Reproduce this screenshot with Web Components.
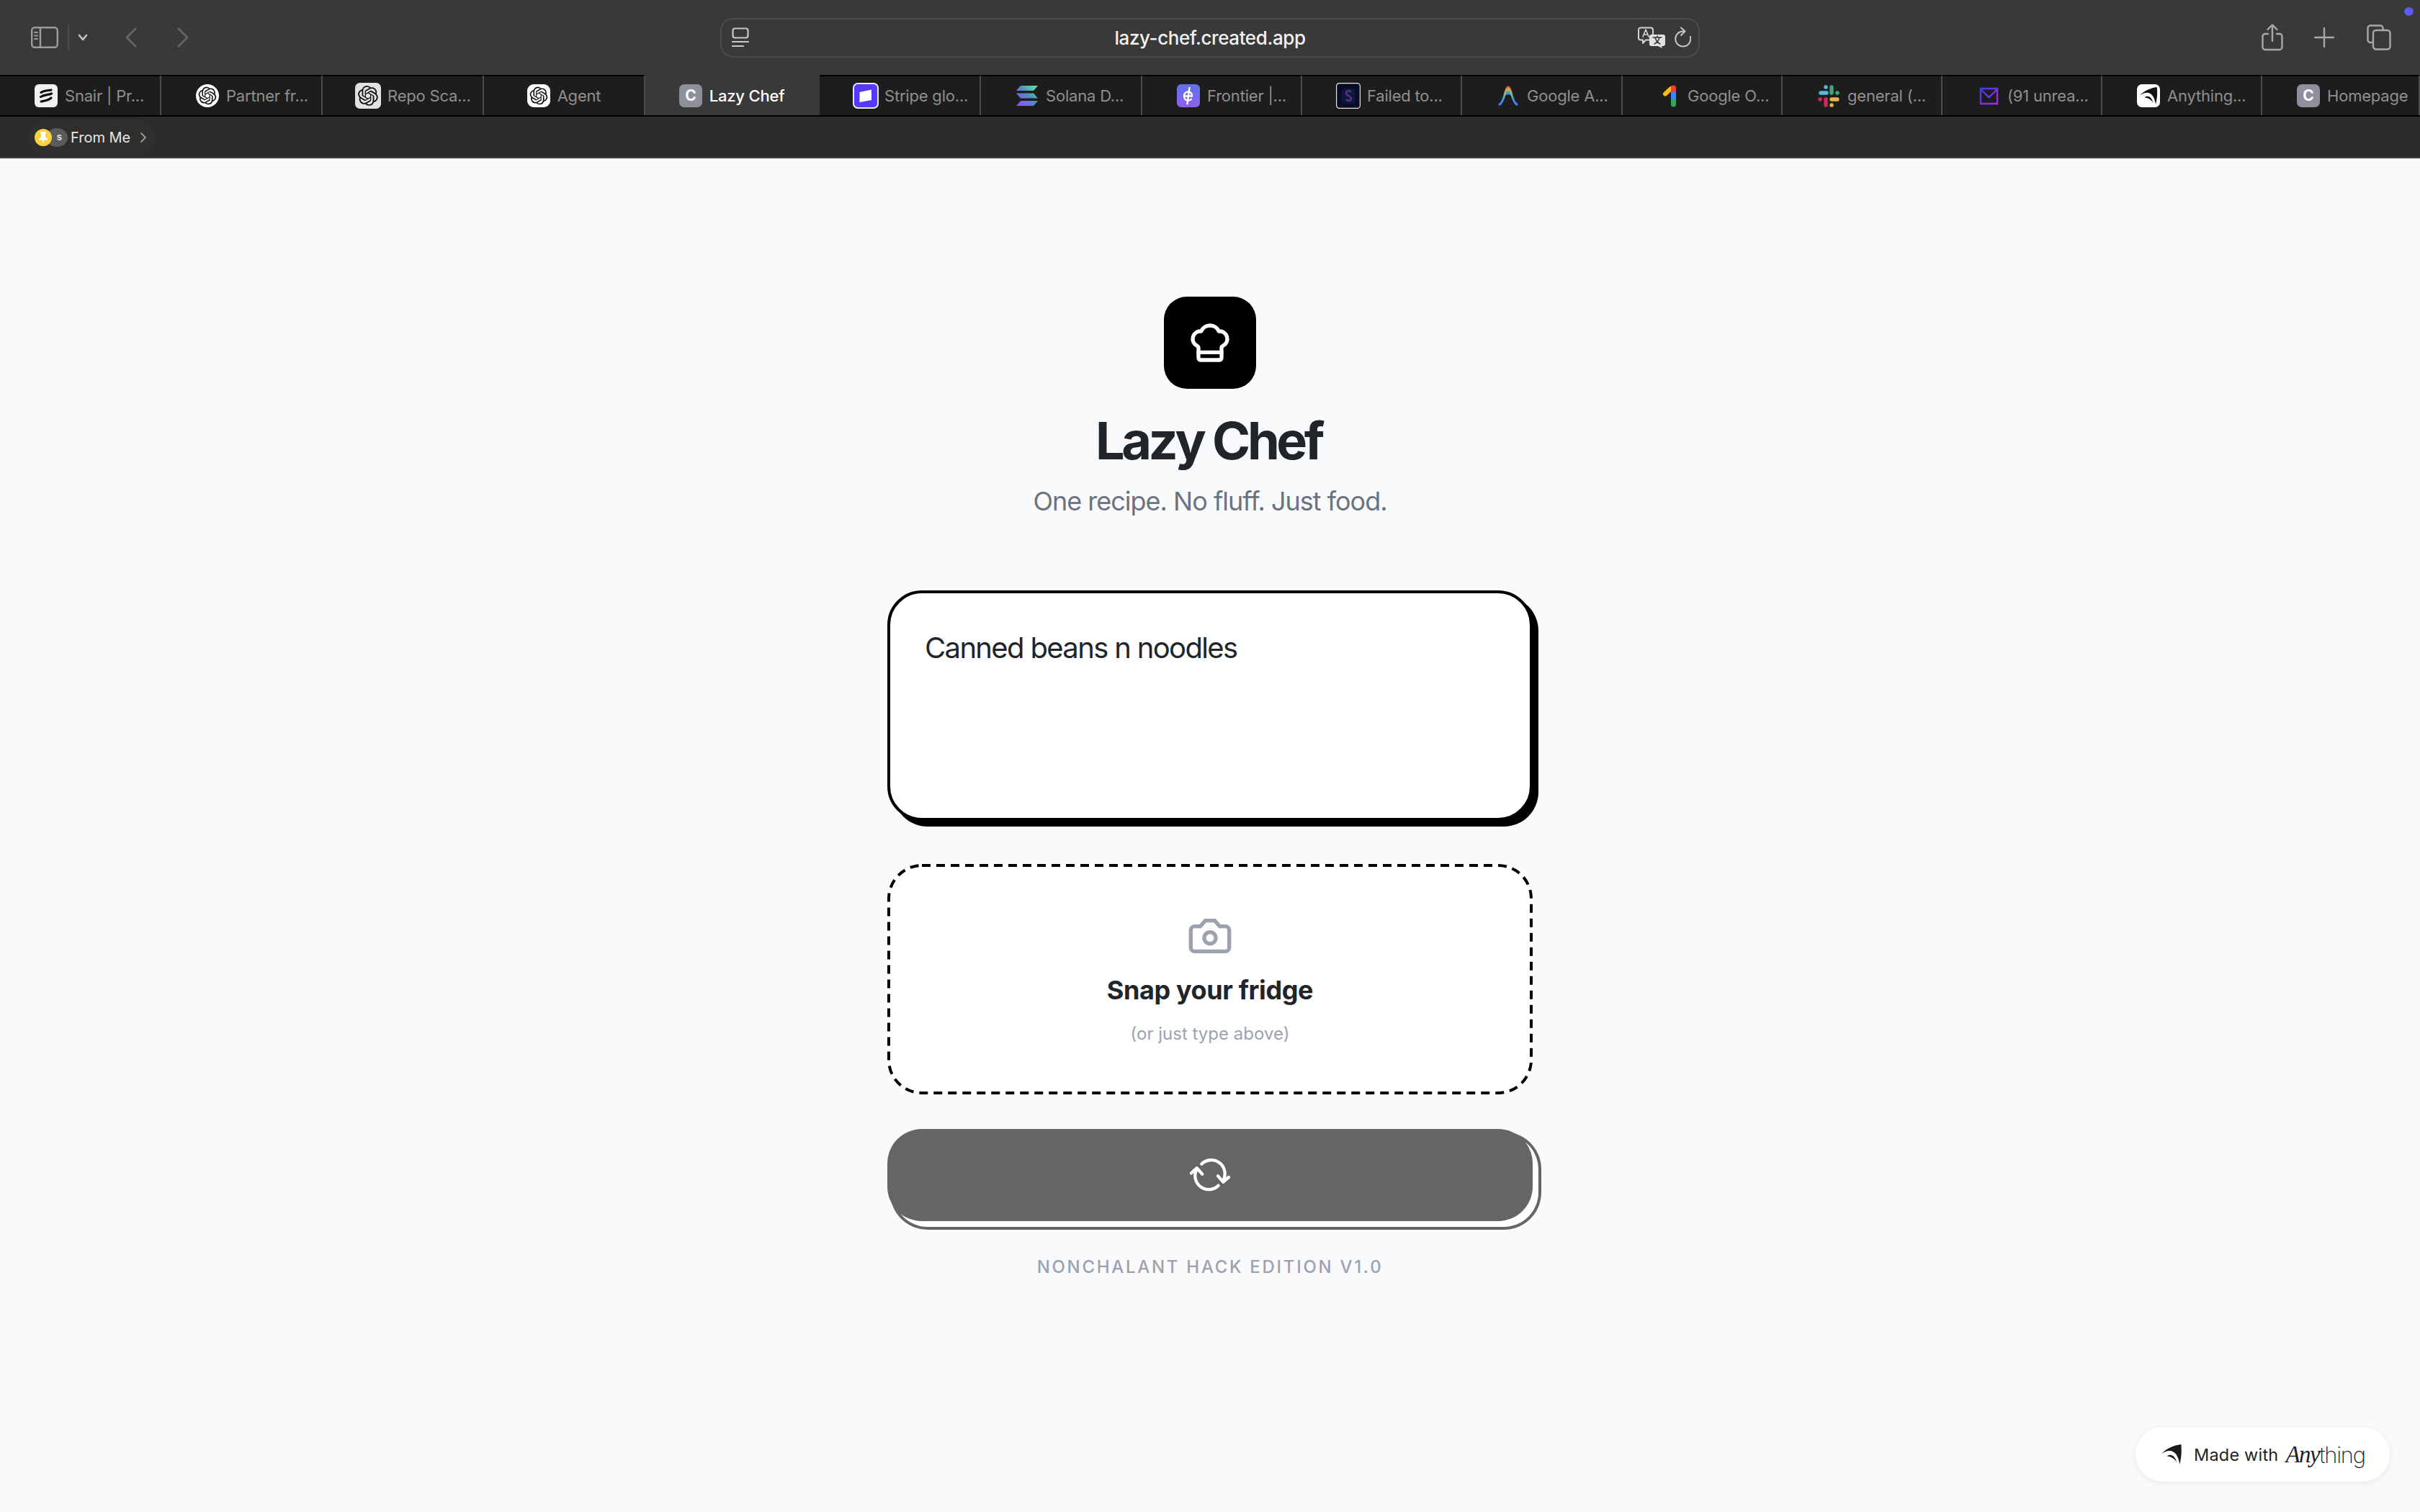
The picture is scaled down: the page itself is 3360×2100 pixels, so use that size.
<!DOCTYPE html>
<html lang="en">
<head>
<meta charset="utf-8">
<title>Lazy Chef</title>
<style>
    html, body { margin: 0; height: 100%; background: #f9fafb; overflow: hidden; font-family: Inter, "Liberation Sans", sans-serif; }
    body { display: flex; flex-direction: column; }
</style>
</head>
<body>
<browser-toolbar url="lazy-chef.created.app"></browser-toolbar>
<tab-strip></tab-strip>
<bookmark-bar></bookmark-bar>
<chef-page>
    <chef-header title="Lazy Chef" tagline="One recipe. No fluff. Just food."></chef-header>
    <recipe-input>Canned beans n noodles</recipe-input>
    <snap-card heading="Snap your fridge" hint="(or just type above)"></snap-card>
    <cook-button></cook-button>
    <edition-note>NONCHALANT HACK EDITION V1.0</edition-note>
</chef-page>
<made-with-badge></made-with-badge>

<script>
const OPENAI_PATH = 'M22.2819 9.8211a5.9847 5.9847 0 0 0-.5157-4.9108 6.0462 6.0462 0 0 0-6.5098-2.9A6.0651 6.0651 0 0 0 4.9807 4.1818a5.9847 5.9847 0 0 0-3.9977 2.9 6.0462 6.0462 0 0 0 .7427 7.0966 5.98 5.98 0 0 0 .511 4.9107 6.051 6.051 0 0 0 6.5146 2.9001A5.9847 5.9847 0 0 0 13.2599 24a6.0557 6.0557 0 0 0 5.7718-4.2058 5.9894 5.9894 0 0 0 3.9977-2.9001 6.0557 6.0557 0 0 0-.7475-7.0729zm-9.022 12.6081a4.4755 4.4755 0 0 1-2.8764-1.0408l.1419-.0804 4.7783-2.7582a.7948.7948 0 0 0 .3927-.6813v-6.7369l2.02 1.1686a.071.071 0 0 1 .038.052v5.5826a4.504 4.504 0 0 1-4.4945 4.4944zm-9.6607-4.1254a4.4708 4.4708 0 0 1-.5346-3.0137l.142.0852 4.783 2.7582a.7712.7712 0 0 0 .7806 0l5.8428-3.3685v2.3324a.0804.0804 0 0 1-.0332.0615L9.74 19.9502a4.4992 4.4992 0 0 1-6.1408-1.6464zM2.3408 7.8956a4.485 4.485 0 0 1 2.3655-1.9728V11.6a.7664.7664 0 0 0 .3879.6765l5.8144 3.3543-2.0201 1.1685a.0757.0757 0 0 1-.071 0l-4.8303-2.7865A4.504 4.504 0 0 1 2.3408 7.872zm16.5963 3.8558L13.1038 8.364 15.1192 7.2a.0757.0757 0 0 1 .071 0l4.8303 2.7913a4.4944 4.4944 0 0 1-.6765 8.1042v-5.6772a.79.79 0 0 0-.407-.667zm2.0107-3.0231l-.142-.0852-4.7735-2.7818a.7759.7759 0 0 0-.7854 0L9.409 9.2297V6.8974a.0662.0662 0 0 1 .0284-.0615l4.8303-2.7866a4.4992 4.4992 0 0 1 6.6802 4.66zM8.3065 12.863l-2.02-1.1638a.0804.0804 0 0 1-.038-.0567V6.0742a4.4992 4.4992 0 0 1 7.3757-3.4537l-.142.0805L8.704 5.459a.7948.7948 0 0 0-.3927.6813zm1.0976-2.3654l2.602-1.4998 2.6069 1.4998v2.9994l-2.5974 1.4997-2.6067-1.4997Z';

// Anything logo, drawn in a 84 x 84 box that starts at 183,138
const ANYTHING_PATH = 'M183 177C205 155 235 142 265 138C268 165 266 195 259 221C255 195 245 170 222 165C208 163 195 170 183 177ZM205 187C222 175 240 185 247 214C238 197 224 190 205 187Z';

const letterIcon = `<svg viewBox="0 0 32 32" width="32" height="32"><rect width="32" height="32" rx="7" fill="#8f8f9b"/><text x="16" y="23" text-anchor="middle" font-family="Inter, sans-serif" font-weight="700" font-size="21" fill="#fff">C</text></svg>`;

const openaiIcon = (bg, round) => `<svg viewBox="0 0 32 32" width="32" height="32"><rect width="32" height="32" rx="${round}" fill="${bg}"/><path transform="translate(3.6 3.6) scale(1.03)" d="${OPENAI_PATH}" fill="#111"/></svg>`;

// Favicons, in the order of the tabs
const ICONS = {
    snair: `<svg viewBox="0 0 32 32" width="32" height="32"><rect width="32" height="32" rx="6" fill="#f1f1f1"/><path d="M9 11.500c3-2.500 9-3 14-3.500M8.500 17.500c5-3 10-2.500 15-4.500M9 24c5-1 10-1.500 14-5" stroke="#111" stroke-width="3.200" fill="none" stroke-linecap="round"/></svg>`,
    openaiCircle: openaiIcon('#fff', 16),
    openaiSquare: `<span style="display:block;margin:-2px 0 -2px -2px">${openaiIcon('#e2e2e2', 6).replace('width="32" height="32">', 'width="36" height="36">')}</span>`,
    openaiRound: openaiIcon('#fff', 9),
    letter: letterIcon,
    stripe: `<svg viewBox="0 0 36 36" width="36" height="36" style="margin:-2px"><rect x="1" y="1" width="34" height="34" rx="6" fill="#533afd" stroke="#e8e8e8" stroke-width="2"/><path d="M9.500 13 26 9.500V24l-16.500 3Z" fill="#fff"/></svg>`,
    solana: `<svg viewBox="0 0 32 32" width="32" height="32"><defs><linearGradient id="sol" x1="0" y1="1" x2="1" y2="0"><stop offset="0" stop-color="#9945ff"/><stop offset=".55" stop-color="#4f8fc0"/><stop offset="1" stop-color="#5ef0a6"/></linearGradient></defs><path d="M7 2h24l-6 7H1Z M1 12.500h24l6 7H7Z M7 23h24l-6 7H1Z" fill="url(#sol)"/></svg>`,
    frontier: `<svg viewBox="0 0 32 32" width="32" height="32"><defs><linearGradient id="fr" x1="0" y1="0" x2="0" y2="1"><stop offset="0" stop-color="#5f72ee"/><stop offset="1" stop-color="#8f5ff0"/></linearGradient></defs><rect width="32" height="32" rx="6" fill="url(#fr)"/><path d="M10 16.500h11c.3-3.500-2-6-5.200-6s-5.800 2.500-5.800 6 2.500 6 5.800 6c1.800 0 3.200-.6 4.200-1.700M17.500 5 14.500 27" stroke="#fff" stroke-width="2.400" fill="none" stroke-linecap="round"/></svg>`,
    failed: `<svg viewBox="0 0 34 36" width="34" height="36" style="margin:-2px 0"><rect x=".6" y=".6" width="32.800" height="34.800" rx="4" fill="#080c24" stroke="#e6e6e6" stroke-width="1.200"/><rect x="8" y="8" width="18" height="21" rx="4" fill="#0e1a3c"/><path d="M21 13c-2-3-7-2-7 1 0 4 7 4 7 8 0 3-5 4-7 1" stroke="#5a2d86" stroke-width="2.500" fill="none"/></svg>`,
    googleAi: `<svg viewBox="0 0 32 32" width="32" height="32"><defs><linearGradient id="gai" x1="0" y1="0" x2="0" y2="1"><stop offset="0" stop-color="#e8604c"/><stop offset=".3" stop-color="#d8b84a"/><stop offset=".5" stop-color="#58b58a"/><stop offset=".8" stop-color="#4285f4"/></linearGradient></defs><path d="M4 28c7-3 8-24 12-24s5 21 12 24" stroke="url(#gai)" stroke-width="3" fill="none" stroke-linecap="round"/><path d="M12 16c1-6 2.500-12 4-12s3 6 4 12c-2.500-2.500-5.500-2.500-8 0Z" fill="url(#gai)"/></svg>`,
    googleOne: `<svg viewBox="0 0 32 32" width="32" height="32"><path d="M11 13.500 19 6" stroke="#fbbc04" stroke-width="6" stroke-linecap="round"/><path d="M19 5a3.500 3.500 0 0 1 7 0v7h-7Z" fill="#ea4335"/><path d="M19 11h7v11h-7Z" fill="#4285f4"/><path d="M19 21h7v7a3.500 3.500 0 0 1-7 0Z" fill="#34a853"/></svg>`,
    slack: `<svg viewBox="0 0 32 32" width="32" height="32" fill="none" stroke-width="5.400" stroke-linecap="round"><path d="M5 12h8M12 4h.1" stroke="#55b9dc"/><path d="M20 4v8M28 12h.1" stroke="#3fa878"/><path d="M20 21h8M20 29h.1" stroke="#e3b24a"/><path d="M12 21v8M4 21h.1" stroke="#cb2c5a"/></svg>`,
    mail: `<svg viewBox="0 0 32 32" width="32" height="32"><defs><linearGradient id="ml" x1="0" y1="0" x2="1" y2="1"><stop offset="0" stop-color="#3c3bf0"/><stop offset="1" stop-color="#b026e6"/></linearGradient></defs><path d="M5 6h23v21H5Z M5 7l11.500 11L28 7" stroke="url(#ml)" stroke-width="2.400" fill="none"/></svg>`,
    anything: `<svg viewBox="0 0 32 32" width="32" height="32"><rect width="32" height="32" rx="7" fill="#fff"/><path transform="translate(4 4) scale(.29) translate(-183 -138)" d="${ANYTHING_PATH}" fill="#111"/></svg>`
};

const TABS = [
    { title: 'Snair | Pr...', icon: 'snair', width: 224 },
    { title: 'Partner fr...', icon: 'openaiCircle', width: 224 },
    { title: 'Repo Sca...', icon: 'openaiSquare', width: 224 },
    { title: 'Agent', icon: 'openaiRound', width: 224, center: true },
    { title: 'Lazy Chef', icon: 'letter', width: 242, center: true, active: true },
    { title: 'Stripe glo...', icon: 'stripe', width: 224 },
    { title: 'Solana D...', icon: 'solana', width: 224 },
    { title: 'Frontier |...', icon: 'frontier', width: 222 },
    { title: 'Failed to...', icon: 'failed', width: 222 },
    { title: 'Google A...', icon: 'googleAi', width: 223 },
    { title: 'Google O...', icon: 'googleOne', width: 222 },
    { title: 'general (...', icon: 'slack', width: 222 },
    { title: '(91 unrea...', icon: 'mail', width: 222 },
    { title: 'Anything...', icon: 'anything', width: 222 },
    { title: 'Homepage', icon: 'letter', width: 219 }
];

class ShadowElement extends HTMLElement {
    constructor() {
        super();
        this.attachShadow({ mode: 'open' });
    }

    connectedCallback() {
        this.render();
    }
}

class BrowserToolbar extends ShadowElement {
    render() {
        this.shadowRoot.innerHTML = `
            <style>
                :host { display: flex; align-items: center; height: 104px; flex: none; background: #393939; padding: 0 40px 0 43px; position: relative; box-sizing: border-box; }
                svg { display: block; flex: none; fill: none; stroke-linecap: round; stroke-linejoin: round; }
                .left { display: flex; align-items: center; width: 957px; }
                .divider { width: 2px; height: 36px; background: #4b4b4b; margin: 0 13px; }
                .address { width: 1360px; height: 55px; box-sizing: border-box; border: 2px solid #4c4c4c; border-radius: 18px; display: flex; align-items: center; padding: 0 10px 0 14px; }
                .url { flex: 1; text-align: center; font-size: 26px; font-weight: 500; color: #f2f2f2; letter-spacing: -.4px; padding-left: 46px; }
                .right { display: flex; align-items: center; margin-left: auto; gap: 45px; }
                .dot { position: absolute; left: 3338px; top: 10px; width: 13px; height: 12px; border-radius: 50%; background: #5e5ce6; }
            </style>
            <div class="left">
                <svg width="38" height="30" viewBox="0 0 38 30" stroke="#9c9c9c" stroke-width="2.400"><rect x="1.200" y="1.200" width="35.600" height="27.600" rx="4"/><path d="M13 1.500v27"/><path d="M5 8h4M5 12.500h4M5 17h4" stroke-width="2"/></svg>
                <span class="divider"></span>
                <svg width="14" height="10" viewBox="0 0 14 10" stroke="#c4c4c4" stroke-width="2.600" style="margin-left:-1px"><path d="M2 2l5 6 5-6"/></svg>
                <svg width="16" height="28" viewBox="0 0 16 28" stroke="#666" stroke-width="2.600" style="margin-left:52px"><path d="M14 2 2 14l12 12"/></svg>
                <svg width="16" height="28" viewBox="0 0 16 28" stroke="#666" stroke-width="2.600" style="margin-left:56px"><path d="M2 2l12 12L2 26"/></svg>
            </div>
            <div class="address">
                <svg width="24" height="28" viewBox="0 0 24 28" stroke="#c8c8c8" stroke-width="2.200"><rect x="1.500" y="1.500" width="21" height="13" rx="3"/><path d="M1 20h22" /><path d="M1 26h15" /></svg>
                <div class="url">${this.getAttribute('url')}</div>
                <svg width="40" height="30" viewBox="0 0 40 30" style="margin-right:10px"><path d="M4 1.500h14a3 3 0 0 1 3 3v11a3 3 0 0 1-3 3H11l-4 4.500V18.500H4a3 3 0 0 1-3-3v-11a3 3 0 0 1 3-3Z" stroke="#d4d4d4" stroke-width="2"/><path d="M7 14 11 4l4 10M8.500 11h5" stroke="#d4d4d4" stroke-width="1.600"/><path d="M19 11h16a3 3 0 0 1 3 3v10a3 3 0 0 1-3 3h-2l1 3-6-3H19a3 3 0 0 1-3-3V14a3 3 0 0 1 3-3Z" fill="#e2e2e2"/><path d="M21 15h12M27 13v2M23 24c4-2 6-5 7-9M31 24c-4-2-6-5-7-9" stroke="#333" stroke-width="1.600"/></svg>
                <svg width="24" height="30" viewBox="0 0 24 30" stroke="#c8c8c8" stroke-width="2"><path d="M13 6.500A10.500 10.500 0 1 0 22.800 14"/><path d="M10 1.500l5.500 5L10 12"/></svg>
            </div>
            <div class="right">
                <svg width="30" height="38" viewBox="0 0 30 38" stroke="#a8a8a8" stroke-width="2.400" style="margin-right:-2px"><path d="M9 14H5a3.500 3.500 0 0 0-3.500 3.500v15A3.500 3.500 0 0 0 5 36h20a3.500 3.500 0 0 0 3.500-3.500v-15A3.500 3.500 0 0 0 25 14h-4"/><path d="M15 24V2M8.500 8 15 1.500 21.500 8"/></svg>
                <svg width="28" height="28" viewBox="0 0 28 28" stroke="#a8a8a8" stroke-width="2.400"><path d="M14 1v26M1 14h26"/></svg>
                <svg width="34" height="36" viewBox="0 0 34 36" stroke="#a8a8a8" stroke-width="2.400"><path d="M7 25H5a3.500 3.500 0 0 1-3.500-3.500V5A3.500 3.500 0 0 1 5 1.500h14A3.500 3.500 0 0 1 22.500 5v2"/><rect x="9" y="8" width="23.500" height="26.500" rx="4"/></svg>
            </div>
            <span class="dot"></span>
        `;
    }
}

class BrowserTab extends ShadowElement {
    render() {
        const active = this.hasAttribute('active');
        this.shadowRoot.innerHTML = `
            <style>
                :host { display: flex; align-items: center; flex: none; box-sizing: border-box; height: 56px; border-top: 2px solid ${active ? '#393939' : '#000'}; background: ${active ? '#393939' : '#1d1d1d'}; border-right: 2px solid ${active ? '#393939' : '#4a4a4a'}; padding-left: 48px; gap: 10px; font-size: 22px; letter-spacing: -.2px; color: ${active ? '#fff' : '#8f8f8f'}; font-weight: ${active ? 500 : 400}; white-space: nowrap; }
                :host([center]) { justify-content: center; padding-left: 0; }
                .icon { width: 32px; height: 32px; flex: none; display: flex; align-items: center; justify-content: center; }
                svg { display: block; flex: none; }
            </style>
            <span class="icon">${ICONS[this.getAttribute('icon')]}</span>
            <slot></slot>
        `;
    }
}

class TabStrip extends ShadowElement {
    render() {
        this.shadowRoot.innerHTML = `
            <style>
                :host { display: flex; flex: none; height: 58px; box-sizing: border-box; border-bottom: 2px solid #000; background: #1d1d1d; overflow: hidden; }
                browser-tab { width: var(--w); }
            </style>
            ${TABS.map(tab => `
                <browser-tab icon="${tab.icon}" style="--w:${tab.width}px" ${tab.center ? 'center' : ''} ${tab.active ? 'active' : ''}>${tab.title}</browser-tab>
            `).join('')}
        `;
    }
}

class BookmarkBar extends ShadowElement {
    render() {
        this.shadowRoot.innerHTML = `
            <style>
                :host { display: flex; align-items: center; flex: none; height: 58px; box-sizing: border-box; border-bottom: 2px solid #40413e; background: #2b2b29; padding: 2px 0 0 40px; }
                .pill { display: flex; align-items: center; height: 50px; width: 177px; box-sizing: border-box; border-radius: 25px; background: #2f302d; padding-left: 8px; font-size: 20px; color: #e6e6e6; }
                .avatars { display: flex; align-items: center; width: 50px; flex: none; }
                .pin { width: 24px; height: 24px; border-radius: 50%; background: #fad13f; display: flex; align-items: center; justify-content: center; position: relative; z-index: 1; }
                .s { width: 30px; height: 26px; margin-left: -8px; border-radius: 50%; background: #5b5b5b; color: #ddd; font-size: 13px; font-weight: 700; line-height: 24px; text-align: right; padding-right: 8px; box-sizing: border-box; }
                svg { display: block; }
                .chev { margin-left: 14px; }
            </style>
            <div class="pill">
                <span class="avatars">
                    <span class="pin"><svg width="14" height="18" viewBox="0 0 14 18" fill="#fff"><path d="M3 1h8v2l-1 1v4l3 3v1.500H8L7 18l-1-5.500H1V11l3-3V4L3 3Z"/></svg></span>
                    <span class="s">s</span>
                </span>
                <span>From Me</span>
                <svg class="chev" width="8" height="14" viewBox="0 0 8 14" fill="none" stroke="#9a9a9a" stroke-width="1.800" stroke-linecap="round"><path d="M1 1l6 6-6 6"/></svg>
            </div>
        `;
    }
}

class ChefPage extends ShadowElement {
    render() {
        this.shadowRoot.innerHTML = `
            <style>
                :host { display: flex; flex-direction: column; align-items: center; flex: 1; background: #f9fafb; padding-top: 192px; }
                .column { width: 896px; display: flex; flex-direction: column; }
            </style>
            <div class="column"><slot></slot></div>
        `;
    }
}

class ChefHeader extends ShadowElement {
    render() {
        this.shadowRoot.innerHTML = `
            <style>
                :host { display: flex; flex-direction: column; align-items: center; margin-bottom: 96px; }
                .logo { width: 128px; height: 128px; border-radius: 32px; background: #000; display: flex; align-items: center; justify-content: center; }
                h1 { margin: 32px 0 16px; padding-right: 4px; font-size: 72px; line-height: 80px; font-weight: 700; letter-spacing: -4.4px; color: #212529; }
                p { margin: 0; font-size: 36px; line-height: 56px; letter-spacing: -1px; color: #6b7280; }
            </style>
            <div class="logo">
                <svg width="64" height="64" viewBox="0 0 24 24" fill="none" stroke="#fff" stroke-width="2" stroke-linecap="round" stroke-linejoin="round"><path d="M17 21a1 1 0 0 0 1-1v-5.350c0-.457.316-.844.727-1.041a4 4 0 0 0-2.134-7.589 5 5 0 0 0-9.186 0 4 4 0 0 0-2.134 7.588c.411.198.727.585.727 1.041V20a1 1 0 0 0 1 1Z"/><path d="M6 17h12"/></svg>
            </div>
            <h1>${this.getAttribute('title')}</h1>
            <p>${this.getAttribute('tagline')}</p>
        `;
    }
}

class RecipeInput extends ShadowElement {
    render() {
        this.shadowRoot.innerHTML = `
            <style>
                :host { display: block; box-sizing: border-box; height: 320px; background: #fff; border: 4px solid #000; border-radius: 48px; box-shadow: 8px 8px 0 #000; padding: 48px; font-size: 40px; line-height: 56px; letter-spacing: -1.65px; color: #212529; margin-bottom: 60px; }
            </style>
            <slot></slot>
        `;
    }
}

class SnapCard extends ShadowElement {
    render() {
        this.shadowRoot.innerHTML = `
            <style>
                :host { display: flex; flex-direction: column; align-items: center; box-sizing: border-box; height: 320px; position: relative; background: #fff; border-radius: 48px; padding-top: 68px; margin-bottom: 48px; }
                svg { display: block; }
                .edge { position: absolute; inset: 0; }
                h2 { margin: 15px 0 17px; font-size: 36px; line-height: 56px; font-weight: 700; letter-spacing: -.4px; color: #212529; }
                p { margin: 0; font-size: 24px; line-height: 32px; color: #9ca3af; }
            </style>
            <svg class="edge" width="896" height="320" viewBox="0 0 896 320" fill="none"><rect x="2" y="2" width="892" height="316" rx="46" stroke="#000" stroke-width="4" stroke-dasharray="12 8"/></svg>
            <svg width="64" height="64" viewBox="0 0 24 24" fill="none" stroke="#9ca3af" stroke-width="2" stroke-linecap="round" stroke-linejoin="round"><path d="M14.500 4h-5L7 7H4a2 2 0 0 0-2 2v9a2 2 0 0 0 2 2h16a2 2 0 0 0 2-2V9a2 2 0 0 0-2-2h-3l-2.500-3z"/><circle cx="12" cy="13" r="3"/></svg>
            <h2>${this.getAttribute('heading')}</h2>
            <p>${this.getAttribute('hint')}</p>
        `;
    }
}

class CookButton extends ShadowElement {
    render() {
        this.shadowRoot.innerHTML = `
            <style>
                :host { display: flex; align-items: center; justify-content: center; height: 128px; border-radius: 48px; background: #646665; box-shadow: 8px 8px 0 #fff, 8px 8px 0 4px #646665; margin-bottom: 48px; }
                svg { display: block; }
            </style>
            <svg width="100" height="80" viewBox="0 6 300 240" fill="none" stroke="#fff" stroke-width="13" stroke-linecap="round" stroke-linejoin="round">
                <path d="M115 80A57 57 0 0 1 205 148"/><path d="M183 130l22 25 23-20"/>
                <path d="M185 170A57 57 0 0 1 95 102"/><path d="M72 118l23-21 23 25"/>
            </svg>
        `;
    }
}

class EditionNote extends ShadowElement {
    render() {
        this.shadowRoot.innerHTML = `
            <style>
                :host { display: block; text-align: center; font-size: 24px; line-height: 32px; font-weight: 500; letter-spacing: 2.7px; color: #9ca3af; }
            </style>
            <slot></slot>
        `;
    }
}

class MadeWithBadge extends ShadowElement {
    render() {
        this.shadowRoot.innerHTML = `
            <style>
                :host { position: absolute; left: 2965px; top: 1982px; width: 353px; height: 76px; box-sizing: border-box; display: flex; align-items: center; padding-left: 36px; background: #fff; border-radius: 38px; box-shadow: 0 2px 8px rgba(0,0,0,.08); color: #1f2228; font-size: 23.500px; }
                svg { display: block; flex: none; margin-right: 17px; }
                .any { font-family: "Liberation Serif", serif; font-style: italic; font-size: 33px; margin-left: 10px; letter-spacing: -1.500px; }
                .thing { font-weight: 200; font-size: 31px; letter-spacing: -1.300px; }
                .made { letter-spacing: .2px; }
            </style>
            <svg width="28" height="28" viewBox="183 138 84 84" fill="#1a1a1a"><path d="${ANYTHING_PATH}"/></svg>
            <span class="made">Made with</span>
            <span class="any">Any</span><span class="thing">thing</span>
        `;
    }
}

customElements.define('browser-toolbar', BrowserToolbar);
customElements.define('browser-tab', BrowserTab);
customElements.define('tab-strip', TabStrip);
customElements.define('bookmark-bar', BookmarkBar);
customElements.define('chef-page', ChefPage);
customElements.define('chef-header', ChefHeader);
customElements.define('recipe-input', RecipeInput);
customElements.define('snap-card', SnapCard);
customElements.define('cook-button', CookButton);
customElements.define('edition-note', EditionNote);
customElements.define('made-with-badge', MadeWithBadge);
</script>
</body>
</html>
